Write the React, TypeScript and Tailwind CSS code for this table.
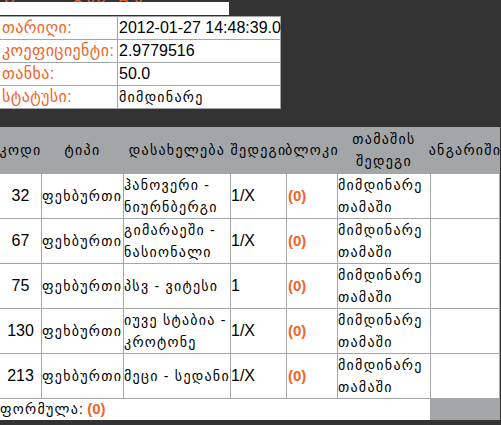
import React from "react";

const font = { fontFamily: '"Liberation Sans", "DejaVu Sans", sans-serif' };

const rows = [
  { code: "32", name: ["ჰანოვერი -", "ნიურნბერგი"], res: "1/X" },
  { code: "67", name: ["გიმარაეში -", "ნასიონალი"], res: "1/X" },
  { code: "75", name: ["პსვ - ვიტესი"], res: "1" },
  { code: "130", name: ["იუვე სტაბია -", "კროტონე"], res: "1/X" },
  { code: "213", name: ["მეცი - სედანი"], res: "1/X" },
];

const geo = "text-[14px] tracking-[1.25px]";
const label = "bg-white text-[#f0642a] text-[16px] tracking-[0.4px] leading-[22px] pl-[2px] whitespace-nowrap";

export default function App() {
  return (
    <div
      className="w-[501px] h-[425px] bg-[#333333] overflow-hidden text-black"
      style={font}
    >
      <div className="h-[2px] overflow-hidden relative">
        <div className="absolute left-[2px] top-[-16px] text-[#f0642a] text-[16px] leading-[20px] tracking-[1px] whitespace-nowrap">
          ფსონის დეტალები
        </div>
      </div>
      <div className="h-[13px] w-[229px] bg-white" />
      <div className="h-px" />
      <div className="grid grid-cols-[117px_162px] grid-rows-[22px_22px_22px_22px] gap-px bg-[#a3a6a9] pt-px pb-px pr-px w-[281px]">
        <div className={label}>თარიღი:</div>
        <div className="bg-white text-[16px] leading-[22px] pl-[1px] whitespace-nowrap">2012-01-27 14:48:39.0</div>
        <div className={label}>კოეფიციენტი:</div>
        <div className="bg-white text-[16px] leading-[22px] pl-[1px] whitespace-nowrap">2.9779516</div>
        <div className={label}>თანხა:</div>
        <div className="bg-white text-[16px] leading-[22px] pl-[1px] whitespace-nowrap">50.0</div>
        <div className={label}>სტატუსი:</div>
        <div className={`bg-white ${geo} leading-[22px] pl-[1px] whitespace-nowrap`}>მიმდინარე</div>
      </div>
      <div className="h-[18px]" />
      <div className={`grid grid-cols-[41px_81px_106px_55px_50px_92px_68px] grid-rows-[46px_44px_44px_44px_44px_44px_21px] gap-px bg-[#a3a6a9] pr-px w-[500px] ${geo}`}>
        <div className="flex items-center justify-center whitespace-nowrap">კოდი</div>
        <div className="flex items-center justify-center whitespace-nowrap">ტიპი</div>
        <div className="flex items-center justify-center whitespace-nowrap">დასახელება</div>
        <div className="flex items-center justify-center whitespace-nowrap">შედეგი</div>
        <div className="flex items-center justify-center whitespace-nowrap">ბლოკი</div>
        <div className="flex flex-col items-center justify-center leading-[22px] whitespace-nowrap">
          <span>თამაშის</span>
          <span>შედეგი</span>
        </div>
        <div className="flex items-center justify-center whitespace-nowrap">ანგარიში</div>
        {rows.map((r) => (
          <React.Fragment key={r.code}>
            <div className="bg-white flex items-center justify-center text-[16px] tracking-normal">{r.code}</div>
            <div className="bg-white flex items-center whitespace-nowrap">ფეხბურთი</div>
            <div className="bg-white flex flex-col justify-center leading-[22px] whitespace-nowrap">
              {r.name.map((l) => (
                <span key={l}>{l}</span>
              ))}
            </div>
            <div className="bg-white flex items-center text-[16px] tracking-normal">{r.res}</div>
            <div className="bg-white flex items-center pl-px text-[15px] tracking-normal font-bold text-[#f0642a]">(0)</div>
            <div className="bg-white flex flex-col justify-center leading-[22px] whitespace-nowrap">
              <span>მიმდინარე</span>
              <span>თამაში</span>
            </div>
            <div className="bg-white" />
          </React.Fragment>
        ))}
        <div className="col-span-6 bg-white flex items-center whitespace-nowrap">
          ფორმულა: <span className="ml-[3px] text-[15px] tracking-normal font-bold text-[#f0642a]">(0)</span>
        </div>
        <div />
      </div>
    </div>
  );
}
